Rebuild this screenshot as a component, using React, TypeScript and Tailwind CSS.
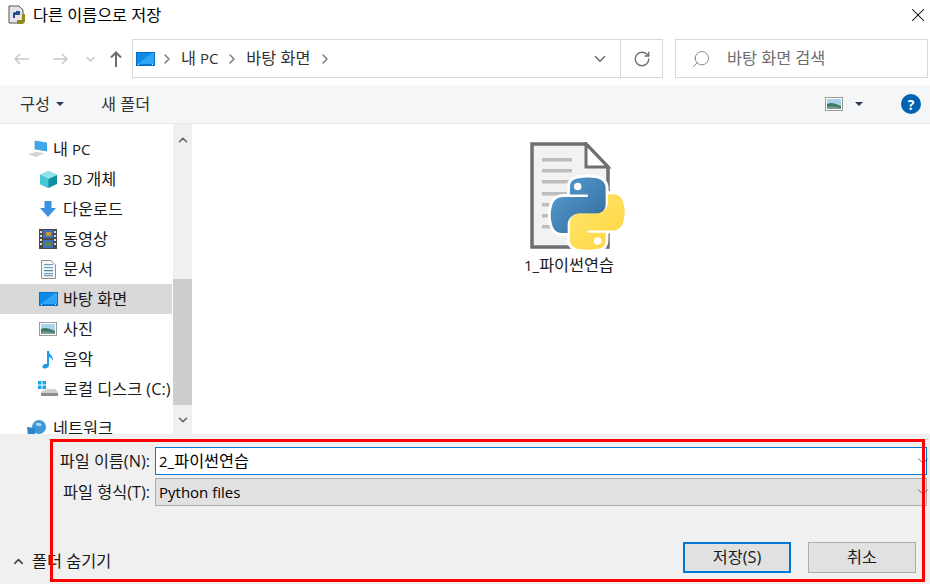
import type { ReactNode } from "react"
import { ChevronDown, ChevronRight, ChevronUp, RotateCw, Search, X } from "lucide-react"

function Ko({ children }: { children: ReactNode }) {
  return <span className="text-[16.3px]">{children}</span>
}

function MonitorIcon({ className }: { className?: string }) {
  return (
    <svg viewBox="0 0 19 14" className={className}>
      <rect x="0" y="0" width="19" height="14" fill="#0a6fc2" />
      <rect x="1" y="1" width="17" height="11" fill="#0d8bea" />
      <path d="M2 12 L16 1 H18 V12Z" fill="#2ea6f5" />
      <rect x="1" y="12" width="17" height="1" fill="#0a7ad2" />
      <rect x="2" y="12" width="1" height="1" fill="#d5eefc" />
      <rect x="16" y="12" width="1" height="1" fill="#d5eefc" />
    </svg>
  )
}

function PictureIcon({ className }: { className?: string }) {
  return (
    <svg viewBox="0 0 18 14" className={className}>
      <rect x="0.5" y="0.5" width="17" height="13" fill="#fff" stroke="#9a9a9a" />
      <rect x="2" y="2" width="14" height="10" fill="#a9d3e8" />
      <path d="M2 7 C6 5 9 6 16 9 V12 H2Z" fill="#3f7a68" />
      <path d="M2 10 C7 9 11 10 16 11 V12 H2Z" fill="#7a9e8e" />
    </svg>
  )
}

function PythonMark({ size, halo }: { size: number; halo?: boolean }) {
  const blue =
    "M54.9 0.9C50.3 0.9 45.9 1.3 42 2 30.6 4 28.5 8.3 28.5 16.1V26.5H55.5V30H18.3C10.5 30 3.6 34.7 1.5 43.7-1 53.9-1.1 60.3 1.5 70.9 3.4 78.8 8 84.5 15.8 84.5H25.1V72.1C25.1 63.3 32.7 55.5 41.8 55.5H68.8C76.3 55.5 82.3 49.3 82.3 41.8V16.1C82.3 8.8 76.1 3.3 68.8 2 64.1 1.2 59.3 0.9 54.9 0.9Z"
  return (
    <svg width={size} height={size} viewBox="-6 -6 122 122">
      <defs>
        <linearGradient id="pyBlue" x1="0" y1="0" x2="1" y2="1">
          <stop offset="0" stopColor="#5a9fd4" />
          <stop offset="1" stopColor="#306998" />
        </linearGradient>
        <linearGradient id="pyYellow" x1="0" y1="0" x2="1" y2="1">
          <stop offset="0" stopColor="#ffd43b" />
          <stop offset="1" stopColor="#ffe873" />
        </linearGradient>
      </defs>
      {halo && (
        <g fill="#fff" stroke="#fff" strokeWidth="9" strokeLinejoin="round">
          <path d={blue} />
          <path d={blue} transform="rotate(180 55.3 55.3)" />
        </g>
      )}
      <path d={blue} fill="url(#pyBlue)" />
      <circle cx="40.3" cy="14.3" r="5.6" fill="#fff" />
      <g transform="rotate(180 55.3 55.3)">
        <path d={blue} fill="url(#pyYellow)" />
        <circle cx="40.3" cy="14.3" r="5.6" fill="#fff" />
      </g>
    </svg>
  )
}

function PythonFileIcon() {
  return (
    <div className="relative h-[112px] w-[100px]">
      <svg width="82" height="108" viewBox="0 0 82 108" className="ml-[4px]">
        <path d="M2 2 H56 L78 25 V105 H2Z" fill="#f2f2f2" stroke="#6f6f6f" strokeWidth="3.5" />
        <path d="M56 2 V25 H78Z" fill="#fff" stroke="#6f6f6f" strokeWidth="3" />
        {[16, 27, 38, 50, 61, 72, 83].map((y) => (
          <rect key={y} x="12" y={y} width="30" height="3.5" fill="#bdbdbd" />
        ))}
      </svg>
      <div className="absolute left-[21px] top-[31px]">
        <PythonMark size={81} halo />
      </div>
    </div>
  )
}

function NavRow({ icon, label, active, pad = "pl-[38px]", gap = "gap-[5px]", className = "" }: { icon: ReactNode; label: ReactNode; active?: boolean; pad?: string; gap?: string; className?: string }) {
  return (
    <div className={`flex h-[30px] shrink-0 items-center ${pad} ${gap} ${active ? "bg-[#d9d9d9]" : ""} ${className}`}>
      <span className="flex h-5 w-5 shrink-0 items-center justify-center">{icon}</span>
      <span className="whitespace-nowrap text-[#1a1a1a]">{label}</span>
    </div>
  )
}

export default function App() {
  return (
    <div className="relative flex h-[584px] w-[930px] flex-col overflow-hidden bg-white text-[15px] text-black [font-family:'Open_Sans','Noto_Sans_CJK_KR',sans-serif]">
      {/* title bar */}
      <div className="flex h-[30px] shrink-0 items-center justify-between pl-[8px] pr-px">
        <div className="flex items-center gap-[7px]">
          <svg width="18" height="20" viewBox="0 0 18 20">
            <path d="M1 1 H11 L15 5 V18 H1Z" fill="#e4e4e4" stroke="#555" />
            <path d="M8 6 H12 V10 H7 V13 H5 V8 Q5 7 8 7Z" fill="#2b4c96" />
            <path d="M14 9 H17 V16 Q17 19 13 19 H9 V15 H14Z" fill="#8d8a1e" />
          </svg>
          <Ko>다른 이름으로 저장</Ko>
        </div>
        <X size={22} strokeWidth={1.1} />
      </div>

      {/* address bar */}
      <div className="flex h-[55px] shrink-0 items-start pt-[9px]">
        <div className="flex h-[39px] w-[132px] shrink-0 items-center">
          <svg width="15" height="12" viewBox="0 0 15 12" fill="none" stroke="#c8c8c8" strokeWidth="1.5" className="ml-[14px]">
            <path d="M15 6H1 M6 1L1 6L6 11" />
          </svg>
          <svg width="15" height="12" viewBox="0 0 15 12" fill="none" stroke="#c8c8c8" strokeWidth="1.5" className="ml-[24px]">
            <path d="M0 6H14 M9 1L14 6L9 11" />
          </svg>
          <svg width="9" height="6" viewBox="0 0 9 6" fill="none" stroke="#c8c8c8" strokeWidth="1.5" className="ml-[18px]">
            <path d="M0.5 1L4.5 5L8.5 1" />
          </svg>
          <svg width="12" height="16" viewBox="0 0 12 16" fill="none" stroke="#6d6d6d" strokeWidth="2" className="ml-[15px]">
            <path d="M6 16V1.5 M1 6.5L6 1.5L11 6.5" />
          </svg>
        </div>
        <div className="flex h-[39px] w-[531px] shrink-0 items-center border border-[#d9d9d9]">
          <MonitorIcon className="ml-[3px] h-[14px] w-[19px]" />
          <ChevronRight size={16} strokeWidth={2.4} className="ml-[4px] text-[#808080]" />
          <span className="ml-[6px] text-[#333]">
            <Ko>내</Ko> PC
          </span>
          <ChevronRight size={16} strokeWidth={2.4} className="ml-[6px] text-[#808080]" />
          <span className="ml-[6px] text-[#333]">
            <Ko>바탕 화면</Ko>
          </span>
          <ChevronRight size={16} strokeWidth={2.4} className="ml-[6px] text-[#808080]" />
          <div className="ml-auto flex h-full items-center">
            <ChevronDown size={18} strokeWidth={2.2} className="mr-[11px] text-[#707070]" />
            <div className="flex h-full w-[42px] items-center justify-center border-l border-[#d9d9d9]">
              <RotateCw size={18} strokeWidth={1.8} className="text-[#707070]" />
            </div>
          </div>
        </div>
        <div className="ml-[12px] flex h-[39px] w-[253px] shrink-0 items-center border border-[#d9d9d9] text-[#6d6d6d]">
          <Search size={20} strokeWidth={1.1} className="ml-[15px] -scale-x-100 text-[#808080]" />
          <span className="ml-[16px]">
            <Ko>바탕 화면 검색</Ko>
          </span>
        </div>
      </div>

      {/* toolbar */}
      <div className="flex h-[39px] shrink-0 items-center border-b border-[#e8e8e8] bg-[#f5f6f7] pl-[20px] text-[#333]">
        <Ko>구성</Ko>
        <span className="ml-[6px] h-0 w-0 border-x-[4px] border-t-[4px] border-x-transparent border-t-[#2b3a55]" />
        <span className="ml-[37px]">
          <Ko>새 폴더</Ko>
        </span>
        <div className="ml-auto flex items-center">
          <PictureIcon className="h-[14px] w-[18px]" />
          <span className="ml-[12px] h-0 w-0 border-x-[4px] border-t-[4px] border-x-transparent border-t-[#2b3a55]" />
          <span className="ml-[38px] mr-[9px] flex h-5 w-5 items-center justify-center rounded-full bg-[#0063b1] text-[14px] font-bold text-white">?</span>
        </div>
      </div>

      {/* navigation and file pane */}
      <div className="flex h-[310px] shrink-0">
        <div className="mr-px flex w-[172px] shrink-0 flex-col overflow-hidden pt-[10px]">
          <NavRow
            pad="pl-[27px]"
            gap="gap-[6px]"
            label={
              <>
                <Ko>내</Ko> PC
              </>
            }
            icon={
              <svg width="20" height="18" viewBox="0 0 20 18">
                <path d="M8 1 L20 3 V11 L8 9Z" fill="#3fa9f0" stroke="#2a86c8" strokeWidth="0.6" />
                <path d="M1 14 L9 12 L18 13 L9 17Z" fill="#d4d4d4" />
              </svg>
            }
          />
          <NavRow
            label={
              <>
                3D <Ko>개체</Ko>
              </>
            }
            icon={
              <svg width="19" height="19" viewBox="0 0 19 19">
                <path d="M9.5 1 L18 5 V14 L9.5 18 L1 14 V5Z" fill="#0f8fa6" />
                <path d="M9.5 1 L18 5 L9.5 9 L1 5Z" fill="#8fe4ec" />
                <path d="M1 5 L9.5 9 V18 L1 14Z" fill="#45c8d6" />
              </svg>
            }
          />
          <NavRow
            label={<Ko>다운로드</Ko>}
            icon={
              <svg width="18" height="18" viewBox="0 0 18 18">
                <path d="M5.5 1 H12.5 V8 H17 L9 17 L1 8 H5.5Z" fill="#3d8fe0" />
              </svg>
            }
          />
          <NavRow
            label={<Ko>동영상</Ko>}
            icon={
              <svg width="18" height="20" viewBox="0 0 18 20">
                <rect width="18" height="20" fill="#4a4a4a" />
                <rect x="4" y="1" width="10" height="8" fill="#3f6fc0" />
                <rect x="4" y="11" width="10" height="8" fill="#3f6fc0" />
                <rect x="7" y="3" width="5" height="4" fill="#c9963a" />
                <rect x="7" y="13" width="5" height="4" fill="#5d8a3a" />
                {[2, 6, 10, 14].map((y) => (
                  <g key={y} fill="#ddd">
                    <rect x="1" y={y} width="2" height="2" />
                    <rect x="15" y={y} width="2" height="2" />
                  </g>
                ))}
              </svg>
            }
          />
          <NavRow
            label={<Ko>문서</Ko>}
            icon={
              <svg width="15" height="19" viewBox="0 0 15 19">
                <path d="M0.5 0.5 H10 L14.5 5 V18.5 H0.5Z" fill="#f4f4f4" stroke="#8f8f8f" />
                {[4, 7, 10, 13, 15].map((y) => (
                  <rect key={y} x="3" y={y} width="9" height="1.2" fill={y === 10 ? "#3f8a8a" : "#6f9ec0"} />
                ))}
              </svg>
            }
          />
          <NavRow label={<Ko>바탕 화면</Ko>} active icon={<MonitorIcon className="h-[14px] w-[19px]" />} />
          <NavRow label={<Ko>사진</Ko>} icon={<PictureIcon className="h-[14px] w-[18px]" />} />
          <NavRow
            label={<Ko>음악</Ko>}
            icon={
              <svg width="14" height="19" viewBox="0 0 14 19">
                <path d="M6 1 H8 C8 5 13 6 12 11 C11 8 9.5 7.5 8 7 V15 C8 17.5 5.5 18.5 3.5 18.5 C1.5 18.5 1 17 1.5 16 C2.5 14 5 13.5 6 14Z" fill="#1e9be8" />
              </svg>
            }
          />
          <NavRow
            label={<Ko>로컬 디스크 (C:)</Ko>}
            icon={
              <svg width="20" height="18" viewBox="0 0 20 18">
                <g fill="#17a5e8">
                  <rect x="0" y="1" width="3.5" height="3.5" />
                  <rect x="4.5" y="1" width="3.5" height="3.5" />
                  <rect x="0" y="5.5" width="3.5" height="3.5" />
                  <rect x="4.5" y="5.5" width="3.5" height="3.5" />
                </g>
                <path d="M3 12 L8 9 H17 L20 12 V16 H3Z" fill="#cfcfcf" />
                <rect x="3" y="13" width="17" height="3" fill="#8d8d8d" />
              </svg>
            }
          />
          <NavRow
            pad="pl-[27px]"
            gap="gap-[6px]"
            className="mt-[9px]"
            label={<Ko>네트워크</Ko>}
            icon={
              <svg width="20" height="18" viewBox="0 0 20 18">
                <circle cx="12" cy="8" r="7" fill="#3f97d6" />
                <path d="M8 5 Q12 2 15 6 Q12 9 8 5Z" fill="#a8d8f5" />
                <path d="M0 8 L8 9 V17 H1Z" fill="#2a86cc" />
              </svg>
            }
          />
        </div>

        {/* scrollbar */}
        <div className="flex w-[19px] shrink-0 flex-col bg-[#f0f0f0]">
          <div className="flex h-[31px] shrink-0 items-center justify-center">
            <ChevronUp size={14} strokeWidth={2.6} className="text-[#606060]" />
          </div>
          <div className="mt-[124px] h-[126px] shrink-0 bg-[#cdcdcd]" />
          <div className="flex flex-1 items-center justify-center">
            <ChevronDown size={14} strokeWidth={2.6} className="text-[#606060]" />
          </div>
        </div>

        {/* file pane */}
        <div className="flex-1 pl-[333px] pt-[18px]">
          <div className="flex w-[88px] flex-col items-center">
            <div className="ml-[14px]">
              <PythonFileIcon />
            </div>
            <span className="-mt-[1px] whitespace-nowrap text-[#1a1a1a]">
              1_<Ko>파이썬연습</Ko>
            </span>
          </div>
        </div>
      </div>

      {/* save form */}
      <div className="flex flex-1 flex-col bg-[#f0f0f0] pr-[3px]">
        <div className="mt-[13px] flex h-[28px] items-center">
          <span className="w-[150px] text-right text-[#1a1a1a]">
            <Ko>파일 이름(N):</Ko>
          </span>
          <div className="ml-[5px] flex h-full flex-1 items-center justify-between border border-[#0078d7] bg-white pl-[3px]">
            <span>
              2_<Ko>파이썬연습</Ko>
            </span>
            <ChevronDown size={18} strokeWidth={1.1} className="-mr-[6px] text-[#505050]" />
          </div>
        </div>
        <div className="mt-[3px] flex h-[28px] items-center">
          <span className="w-[150px] text-right text-[#1a1a1a]">
            <Ko>파일 형식(T):</Ko>
          </span>
          <div className="ml-[5px] flex h-full flex-1 items-center justify-between border border-[#adadad] bg-[#e1e1e1] pl-[3px]">
            <span>Python files</span>
            <ChevronDown size={18} strokeWidth={1.1} className="-mr-[6px] text-[#505050]" />
          </div>
        </div>
        <div className="mt-auto mb-[11px] flex h-[31px] items-center pl-[11px] pr-[11px]">
          <div className="mt-[7px] flex items-center">
            <ChevronUp size={15} strokeWidth={2.4} className="text-[#404040]" />
            <span className="ml-[6px] text-[#1a1a1a]">
              <Ko>폴더 숨기기</Ko>
            </span>
          </div>
          <button className="ml-auto flex h-[31px] w-[108px] items-center justify-center border-2 border-[#0078d7] bg-[#e1e1e1] text-[#1a1a1a]">
            <Ko>저장(S)</Ko>
          </button>
          <button className="ml-[17px] flex h-[31px] w-[108px] items-center justify-center border border-[#adadad] bg-[#e1e1e1] text-[#1a1a1a]">
            <Ko>취소</Ko>
          </button>
        </div>
      </div>

      {/* red annotation */}
      <div className="pointer-events-none absolute left-[50px] top-[439px] h-[143px] w-[875px] border-[3px] border-[#ff0000]" />
    </div>
  )
}
